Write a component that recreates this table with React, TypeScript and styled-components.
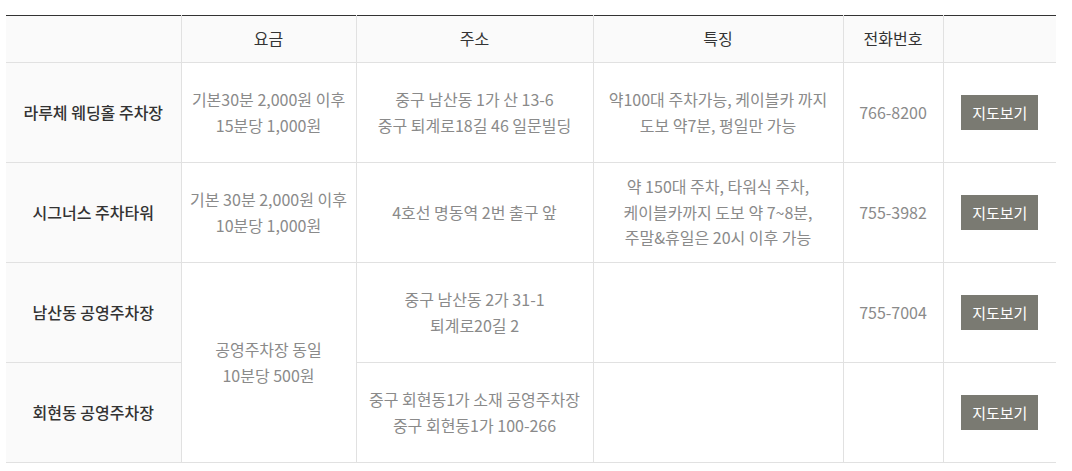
import React from "react";
import styled, { createGlobalStyle } from "styled-components";

const Global = createGlobalStyle`
  html, body { margin: 0; padding: 0; background: #fff; }
  body {
    font-family: "Noto Sans CJK KR", "Noto Sans", sans-serif;
    -webkit-font-smoothing: antialiased;
  }
`;

const Page = styled.div`
  padding: 15px 16px 0 6px;
`;

const Table = styled.table`
  width: 1050px;
  border-collapse: collapse;
  table-layout: fixed;
  border-top: 1px solid #333;
  font-size: 16px;
  line-height: 25.5px;
  text-align: center;
`;

const HeadCell = styled.th`
  height: 46px;
  padding: 0;
  background: #fafafa;
  color: #333;
  font-weight: 400;
  border: 1px solid #e1e1e1;
  border-top: none;
  &:first-child { border-left: none; }
  &:last-child { border-right: none; }
`;

const LabelCell = styled.th`
  height: 99px;
  padding: 0;
  background: #fafafa;
  color: #333;
  font-weight: 500;
  border: 1px solid #e1e1e1;
  border-left: none;
`;

const Cell = styled.td<{ $last?: boolean }>`
  padding: 0;
  color: #8a8a8a;
  vertical-align: middle;
  border: 1px solid #e1e1e1;
  ${(p) => (p.$last ? "border-right: none;" : "")}
`;

const MapButton = styled.button`
  width: 77px;
  height: 35px;
  padding: 0;
  border: none;
  background: #7a7a72;
  color: #fff;
  font-family: inherit;
  font-size: 15px;
  cursor: pointer;
`;

type Row = {
  name: string;
  fee?: string[];
  feeSpan?: number;
  addr: string[];
  feat: string[];
  tel: string;
};

const rows: Row[] = [
  {
    name: "라루체 웨딩홀 주차장",
    fee: ["기본30분 2,000원 이후", "15분당 1,000원"],
    addr: ["중구 남산동 1가 산 13-6", "중구 퇴계로18길 46 일문빌딩"],
    feat: ["약100대 주차가능, 케이블카 까지", "도보 약7분, 평일만 가능"],
    tel: "766-8200",
  },
  {
    name: "시그너스 주차타워",
    fee: ["기본 30분 2,000원 이후", "10분당 1,000원"],
    addr: ["4호선 명동역 2번 출구 앞"],
    feat: ["약 150대 주차, 타워식 주차,", "케이블카까지 도보 약 7~8분,", "주말&휴일은 20시 이후 가능"],
    tel: "755-3982",
  },
  {
    name: "남산동 공영주차장",
    fee: ["공영주차장 동일", "10분당 500원"],
    feeSpan: 2,
    addr: ["중구 남산동 2가 31-1", "퇴계로20길 2"],
    feat: [],
    tel: "755-7004",
  },
  {
    name: "회현동 공영주차장",
    addr: ["중구 회현동1가 소재 공영주차장", "중구 회현동1가 100-266"],
    feat: [],
    tel: "",
  },
];

const Lines = ({ lines }: { lines: string[] }) => (
  <>
    {lines.map((l, i) => (
      <React.Fragment key={i}>
        {i > 0 && <br />}
        {l}
      </React.Fragment>
    ))}
  </>
);

export default function App() {
  return (
    <Page>
      <Global />
      <Table>
        <colgroup>
          <col style={{ width: 175 }} />
          <col style={{ width: 175 }} />
          <col style={{ width: 237 }} />
          <col style={{ width: 250 }} />
          <col style={{ width: 100 }} />
          <col style={{ width: 113 }} />
        </colgroup>
        <thead>
          <tr>
            <HeadCell></HeadCell>
            <HeadCell>요금</HeadCell>
            <HeadCell>주소</HeadCell>
            <HeadCell>특징</HeadCell>
            <HeadCell>전화번호</HeadCell>
            <HeadCell></HeadCell>
          </tr>
        </thead>
        <tbody>
          {rows.map((r) => (
            <tr key={r.name}>
              <LabelCell scope="row">{r.name}</LabelCell>
              {r.fee && (
                <Cell rowSpan={r.feeSpan ?? 1}>
                  <Lines lines={r.fee} />
                </Cell>
              )}
              <Cell>
                <Lines lines={r.addr} />
              </Cell>
              <Cell>
                <Lines lines={r.feat} />
              </Cell>
              <Cell>{r.tel}</Cell>
              <Cell $last>
                <MapButton type="button">지도보기</MapButton>
              </Cell>
            </tr>
          ))}
        </tbody>
      </Table>
    </Page>
  );
}
